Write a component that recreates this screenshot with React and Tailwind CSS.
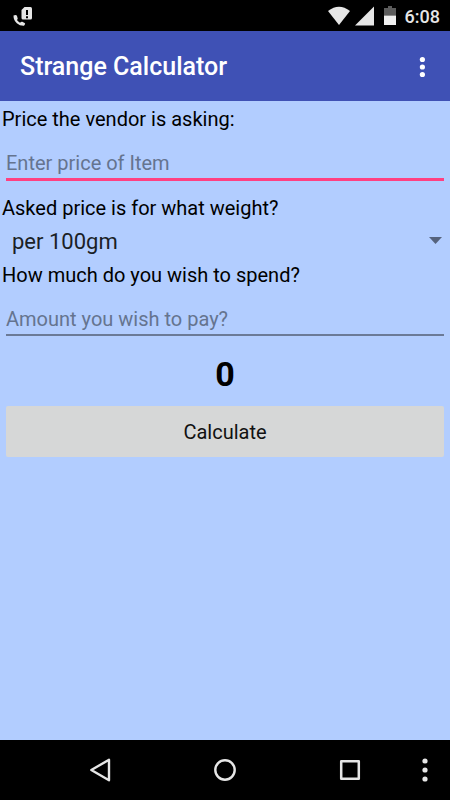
import React, { useState } from "react";

const weights = [
  { label: "per 100gm", grams: 100 },
  { label: "per 250gm", grams: 250 },
  { label: "per 500gm", grams: 500 },
  { label: "per 1kg", grams: 1000 },
];

const StatusBar = () => (
  <div className="h-[31px] shrink-0 bg-black text-[#e6e6e6] flex items-center justify-between pl-3 pr-[10px]">
    <svg width="22" height="22" viewBox="0 0 22 22" aria-hidden="true">
      <path
        d="M1.500 10.500 L3.600 10 Q4.600 10 5 11 L5.700 13.400 Q5.800 14.300 4.900 15 Q6.200 16.800 8 17.800 L9 17 Q9.600 16.500 10.300 16.800 L12.600 18 Q13.400 18.500 13 19.300 L12 20.800 Q8 21 4.800 18.200 Q1.400 15 1.500 10.500Z"
        fill="currentColor"
      />
      <path
        d="M12.500 2 H18.500 Q20 2 20 3.500 V13 Q20 14.500 18.500 14.500 H11 Q9.500 14.500 9.500 13 V5Z"
        fill="currentColor"
      />
      <path d="M14 5 h2 v5 h-2z M14 11.200 h2 v2 h-2z" fill="#000" />
    </svg>
    <div className="flex items-center">
      <svg width="22" height="20" viewBox="0 0 22 20" aria-hidden="true">
        <path d="M0 5 Q11 -3.500 22 5 L11 19Z" fill="currentColor" />
      </svg>
      <svg className="ml-[5px]" width="19" height="20" viewBox="0 0 19 20" aria-hidden="true">
        <path d="M19 0.500 V19.500 H0Z" fill="currentColor" />
      </svg>
      <svg className="ml-[10px]" width="12" height="20" viewBox="0 0 12 20" aria-hidden="true">
        <path d="M4 0 H8 V2 H12 V9.500 H0 V2 H4Z" fill="#5c5c5c" />
        <path d="M0 9.500 H12 V19 H0Z" fill="#f0f0f0" />
      </svg>
      <span className="ml-[9px] mt-[2px] text-[18px] leading-5 font-medium">6:08</span>
    </div>
  </div>
);

const Toolbar = () => (
  <header className="h-[70px] shrink-0 bg-[#3f51b5] text-white flex items-center justify-between pt-[2px] pl-5 pr-4">
    <h1 className="text-[25px] leading-8 font-medium">Strange Calculator</h1>
    <button type="button" aria-label="More options" className="w-6 h-10 flex items-center justify-center">
      <svg width="6" height="22" viewBox="0 0 6 22" fill="currentColor">
        <circle cx="3.400" cy="3.500" r="2.600" />
        <circle cx="3.400" cy="11" r="2.600" />
        <circle cx="3.400" cy="18.500" r="2.600" />
      </svg>
    </button>
  </header>
);

const NavBar = () => (
  <nav className="h-[60px] shrink-0 bg-black text-[#e6e6e6] flex items-center pl-[37px]">
    <button type="button" aria-label="Back" className="flex-1 h-full flex items-center justify-center">
      <svg width="24" height="26" viewBox="0 0 24 26" fill="none" stroke="currentColor" strokeWidth="2.400" strokeLinejoin="round">
        <path d="M21 2.800 V23.200 L3.300 13Z" />
      </svg>
    </button>
    <button type="button" aria-label="Home" className="flex-1 h-full flex items-center justify-center">
      <svg width="24" height="24" viewBox="0 0 24 24" fill="none" stroke="currentColor" strokeWidth="2.400">
        <circle cx="12" cy="12" r="9.700" />
      </svg>
    </button>
    <button type="button" aria-label="Recent apps" className="flex-1 h-full flex items-center justify-center">
      <svg width="22" height="22" viewBox="0 0 22 22" fill="none" stroke="currentColor" strokeWidth="2.500" strokeLinejoin="round">
        <rect x="2.200" y="2.200" width="17.600" height="17.600" />
      </svg>
    </button>
    <button type="button" aria-label="Menu" className="w-[37px] h-full flex items-center justify-center pr-3">
      <svg width="6" height="24" viewBox="0 0 6 24" fill="currentColor">
        <circle cx="3" cy="3" r="2.600" />
        <circle cx="3" cy="12" r="2.600" />
        <circle cx="3" cy="21" r="2.600" />
      </svg>
    </button>
  </nav>
);

const App = () => {
  const [price, setPrice] = useState("");
  const [grams, setGrams] = useState(100);
  const [amount, setAmount] = useState("");
  const [result, setResult] = useState(0);

  const handleSubmit = (e) => {
    e.preventDefault();
    const value = (Number(amount) / Number(price)) * grams;
    setResult(Number.isFinite(value) ? Math.round(value) : 0);
  };

  return (
    <div className="min-h-screen flex flex-col bg-[#b2cdff] font-[Roboto,sans-serif] text-black">
      <StatusBar />
      <Toolbar />

      <form onSubmit={handleSubmit} className="flex-1 flex flex-col pt-[6px]">
        <label htmlFor="price" className="px-[2px] text-[20px] leading-6">
          Price the vendor is asking:
        </label>
        <input
          id="price"
          type="text"
          inputMode="decimal"
          value={price}
          onChange={(e) => setPrice(e.target.value)}
          placeholder="Enter price of Item"
          className="mx-[6px] mt-4 h-[34px] border-b-[3px] border-[#ff4081] text-[20px] leading-6 placeholder:text-[#65748f] focus:outline-none"
        />

        <label htmlFor="weight" className="mt-[15px] px-[2px] text-[20px] leading-6">
          Asked price is for what weight?
        </label>
        <div className="grid items-center">
          <select
            id="weight"
            value={grams}
            onChange={(e) => setGrams(Number(e.target.value))}
            className="col-start-1 row-start-1 appearance-none h-[43px] pl-3 pr-8 text-[22px] leading-6 text-[#1b1f26] focus:outline-none"
          >
            {weights.map((w) => (
              <option key={w.grams} value={w.grams}>
                {w.label}
              </option>
            ))}
          </select>
          <svg
            className="col-start-1 row-start-1 justify-self-end mr-2 mb-[2px] pointer-events-none"
            width="13"
            height="7"
            viewBox="0 0 13 7"
            aria-hidden="true"
          >
            <path d="M0 0 H13 L6.500 7Z" fill="#56637d" />
          </svg>
        </div>

        <label htmlFor="amount" className="px-[2px] text-[20px] leading-6">
          How much do you wish to spend?
        </label>
        <input
          id="amount"
          type="text"
          inputMode="decimal"
          value={amount}
          onChange={(e) => setAmount(e.target.value)}
          placeholder="Amount you wish to pay?"
          className="mx-[6px] mt-4 h-[33px] border-b-2 border-[#6b7a97] text-[20px] leading-6 placeholder:text-[#65748f] focus:outline-none"
        />

        <output htmlFor="price weight amount" className="mt-[18px] text-center text-[34px] leading-10 font-bold">
          {result}
        </output>
        <button
          type="submit"
          className="mx-[6px] mt-3 h-[51px] rounded-[2px] bg-[#d6d7d7] text-[20px] leading-6 text-[#111111]"
        >
          Calculate
        </button>
      </form>

      <NavBar />
    </div>
  );
};

export default App;
